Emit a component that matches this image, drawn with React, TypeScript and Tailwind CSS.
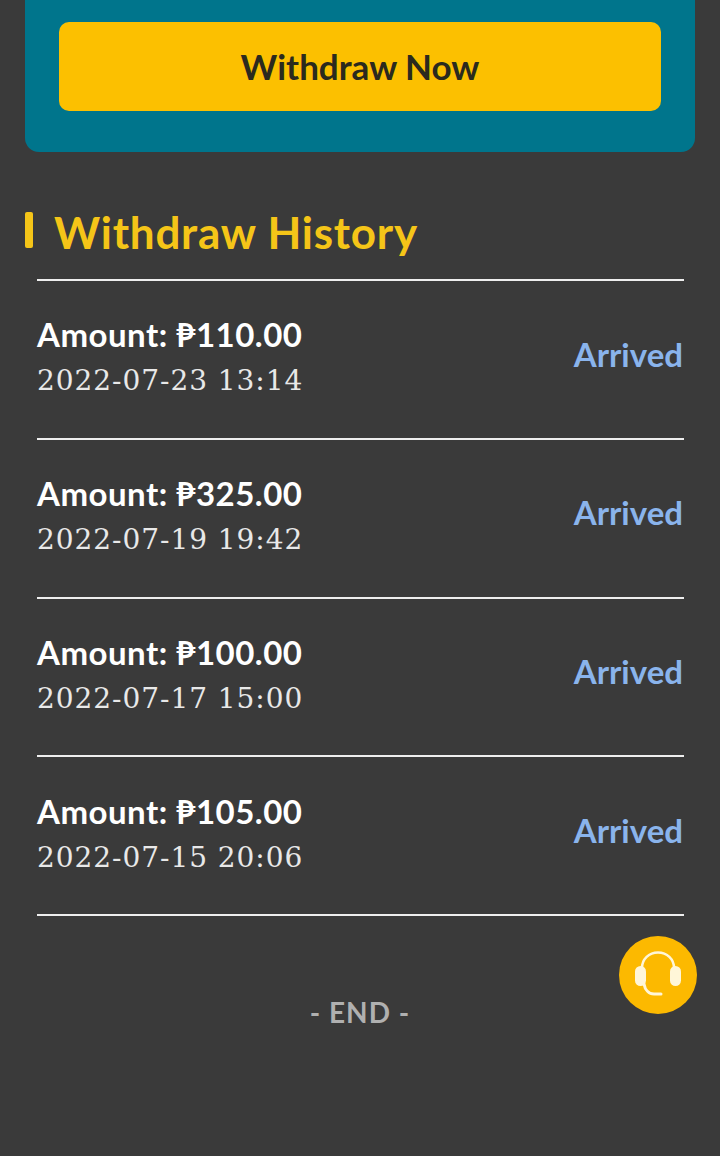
const records = [
  { amount: "110.00", time: "2022-07-23 13:14" },
  { amount: "325.00", time: "2022-07-19 19:42" },
  { amount: "100.00", time: "2022-07-17 15:00" },
  { amount: "105.00", time: "2022-07-15 20:06" },
];

const sans = "font-['Lato','Liberation_Sans',sans-serif]";

export default function App() {
  return (
    <div className={`relative h-[1156px] w-[720px] overflow-hidden bg-[#3a3a3a] ${sans}`}>
      <div className="mx-[25px] rounded-b-[14px] bg-[#00758c] px-[34px] pt-[22px] pb-[41px]">
        <button className="flex h-[89px] w-full items-center justify-center rounded-[10px] bg-[#fcc000] text-[35px] font-bold text-[#2b2a1e]">
          Withdraw Now
        </button>
      </div>

      <div className="mt-[50px] flex h-[60px] items-center pl-[25px]">
        <span className="mb-[4px] h-[36px] w-[8px] rounded-[2px] bg-[#f5c518]" />
        <h2 className="ml-[21px] text-[44px] leading-none font-bold tracking-[0.75px] text-[#f5c518]">Withdraw History</h2>
      </div>

      <div className="mt-[17px] mr-[36px] ml-[37px] border-t-2 border-[#eeeeee]">
        {records.map((r) => (
          <div key={r.time} className="flex h-[158.75px] items-center justify-between border-b-2 border-[#eeeeee]">
            <div className="pb-[3px]">
              <div className="text-[33px] leading-[44px] font-bold tracking-[0.5px] text-white">Amount: ₱{r.amount}</div>
              <div className="mt-[3px] font-['DejaVu_Serif',serif] text-[28px] leading-[44px] tracking-[0.95px] text-[#e8e8e8]">{r.time}</div>
            </div>
            <span className="pr-[1px] pb-[10px] text-[33px] font-bold text-[#8ab4ec]">Arrived</span>
          </div>
        ))}
      </div>

      <div className="mt-[76px] text-center text-[28px] leading-[40px] font-bold tracking-[1px] text-[#b0b0b0]">- END -</div>

      <button className="absolute top-[936px] left-[619px] flex h-[78px] w-[78px] items-center justify-center rounded-full bg-[#fcb900]">
        <svg width="50" height="50" viewBox="0 0 50 50" fill="none">
          <path d="M9 24V18C9 9 16 2.5 25 2.5C34 2.5 41 9 41 18V24" stroke="#fff6d8" strokeWidth="2.5" />
          <rect x="2" y="16" width="11" height="20" rx="5.5" fill="#fff6d8" />
          <rect x="37" y="16" width="11" height="20" rx="5.5" fill="#fff6d8" />
          <path d="M11 34C12 40 16 44 21 44H28" stroke="#fff6d8" strokeWidth="3" strokeLinecap="round" />
        </svg>
      </button>
    </div>
  );
}
